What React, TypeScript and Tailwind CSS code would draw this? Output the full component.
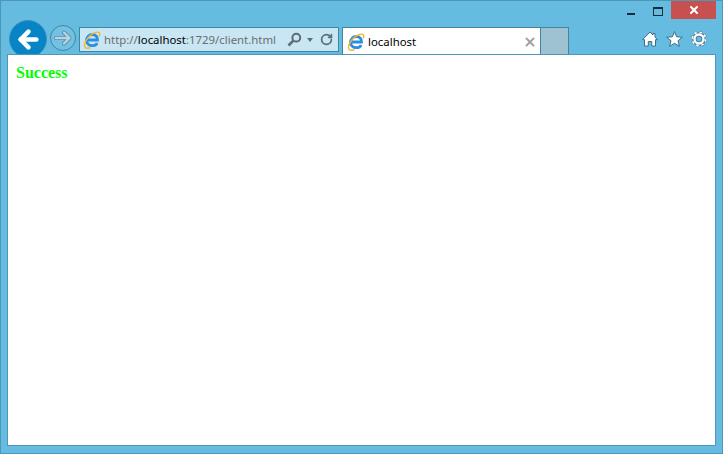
import { ArrowLeft, RotateCw, X } from "lucide-react";

function IeLogo() {
  return (
    <svg width="18" height="18" viewBox="0 0 18 18" fill="none" className="shrink-0">
      <path d="M3.800 9h10.700c.2-3.300-2.100-5.500-5.100-5.500-3.300 0-5.800 2.500-5.800 5.700s2.500 5.500 5.800 5.500c2.200 0 3.900-.9 4.800-2.600" stroke="#2b8ee0" strokeWidth="2.800" />
      <path d="M1.600 15.200C.7 11.300 6.400 3.300 12.600 1.400c3.400-1 5.100.6 3.600 4.100" stroke="#f4b52e" strokeWidth="1.400" />
      <path d="M1.600 15.200c.4 2.300 2.900 2.700 5.800 1.300" stroke="#f4b52e" strokeWidth="1.400" />
    </svg>
  );
}

export default function App() {
  return (
    <div className="flex h-[454px] w-[723px] flex-col overflow-hidden border border-[#4f97b6] bg-[#65bbe0] font-['Liberation_Sans',sans-serif]">
      {/* title bar */}
      <div className="flex h-[18px] shrink-0 items-start justify-end pr-[6px]">
        <div className="mt-[12px] h-[2px] w-[8px] bg-[#1c2c36]" />
        <div className="ml-[18px] mt-[6px] h-[9px] w-[10px] border border-t-[2px] border-[#1c2c36]" />
        <div className="ml-[8px] flex h-[18px] w-[45px] items-center justify-center bg-[#c75050]">
          <X size={12} strokeWidth={4} className="text-white" />
        </div>
      </div>

      {/* toolbar */}
      <div className="flex h-[35px] shrink-0 items-end pl-[8px] pr-[9px]">
        <div className="mb-[-4px] flex h-[38px] w-[38px] shrink-0 items-center justify-center rounded-full border border-[#3c8fb5] bg-[#0784c6]">
          <ArrowLeft size={27} strokeWidth={4} className="text-white" />
        </div>
        <div className="mb-[3px] ml-[3px] flex h-[26px] w-[26px] shrink-0 items-center justify-center rounded-full border border-[#41879f] bg-[#74c0e2]">
          <svg width="20" height="18" viewBox="0 0 20 18" fill="none" strokeLinecap="round" strokeLinejoin="round">
            <path d="M3 9h13.500M11 3.500 16.500 9 11 14.500" stroke="#4f8fa8" strokeWidth="4" />
            <path d="M3 9h13.500M11 3.500 16.500 9 11 14.500" stroke="#b9d5e2" strokeWidth="2.400" />
          </svg>
        </div>
        <div className="mb-[2px] ml-[3px] flex h-[25px] w-[260px] shrink-0 items-center border border-[#41859f] bg-[#c8e6f3] pl-[3px] pr-[5px]">
          <IeLogo />
          <span className="ml-[3px] whitespace-nowrap font-['Noto_Sans',sans-serif] text-[11.4px] text-[#6d6d6d]">
            http://<span className="text-black">localhost</span>:1729/client.html
          </span>
          <svg width="15" height="15" viewBox="0 0 15 15" fill="none" className="ml-auto shrink-0" stroke="#5e6d75">
            <circle cx="9.300" cy="5.700" r="3.900" strokeWidth="2" />
            <path d="M6.300 8.700 1.500 13.500" strokeWidth="2.600" />
          </svg>
          <div className="ml-[5px] h-0 w-0 shrink-0 border-x-[3.500px] border-t-[4px] border-x-transparent border-t-[#5e6d75]" />
          <RotateCw size={13} strokeWidth={3.2} className="ml-[7px] shrink-0 text-[#5e6d75]" />
        </div>
        <div className="ml-[3px] flex h-[27px] w-[199px] shrink-0 items-center border border-b-0 border-[#41859f] bg-white pl-[4px] pr-[3px] pt-[1px]">
          <IeLogo />
          <span className="ml-[3px] font-['Noto_Sans',sans-serif] text-[11.4px] text-black">localhost</span>
          <X size={14} strokeWidth={3.5} className="ml-auto text-[#a3a3a3]" />
        </div>
        <div className="h-[27px] w-[28px] shrink-0 border border-b-0 border-l-0 border-[#41859f] bg-[#9fc2d3]" />
        <div className="mb-[7px] ml-auto mr-[6px] flex items-center gap-[8px]">
          <svg width="16" height="16" viewBox="0 0 16 16">
            <path d="M8 1 11 4V2.500h2v3.600l2.500 2.600h-2V15H9.700v-4.500H6.300V15H2.500V8.700h-2z" fill="#fff" stroke="#3b6f88" strokeWidth="1" strokeLinejoin="round" />
          </svg>
          <svg width="17" height="16" viewBox="0 0 17 16">
            <path d="M8.500.6 10.600 5.800 16.300 6.200l-4.300 3.600 1.400 5.500-4.900-3-4.900 3 1.400-5.500L.7 6.200l5.700-.4z" fill="#fff" stroke="#3b6f88" strokeWidth="1" strokeLinejoin="round" />
          </svg>
          <svg width="16" height="16" viewBox="0 0 16 16">
            <circle cx="8" cy="8" r="6.800" fill="none" stroke="#3b6f88" strokeWidth="2.400" strokeDasharray="2.900 2.440" />
            <circle cx="8" cy="8" r="4.600" fill="none" stroke="#3b6f88" strokeWidth="4.200" />
            <circle cx="8" cy="8" r="6.700" fill="none" stroke="#fff" strokeWidth="1.800" strokeDasharray="2.500 2.760" strokeDashoffset="-0.200" />
            <circle cx="8" cy="8" r="4.500" fill="none" stroke="#fff" strokeWidth="2.400" />
          </svg>
        </div>
      </div>

      {/* page */}
      <div className="relative mx-[6px] mb-[7px] flex-1 border border-[#4f97b6] bg-white px-[8px] py-[9px]">
        <h1 className="font-['Liberation_Serif',serif] text-[16px] leading-[18px] font-bold text-[#00ff00]">Success</h1>
      </div>
    </div>
  );
}
